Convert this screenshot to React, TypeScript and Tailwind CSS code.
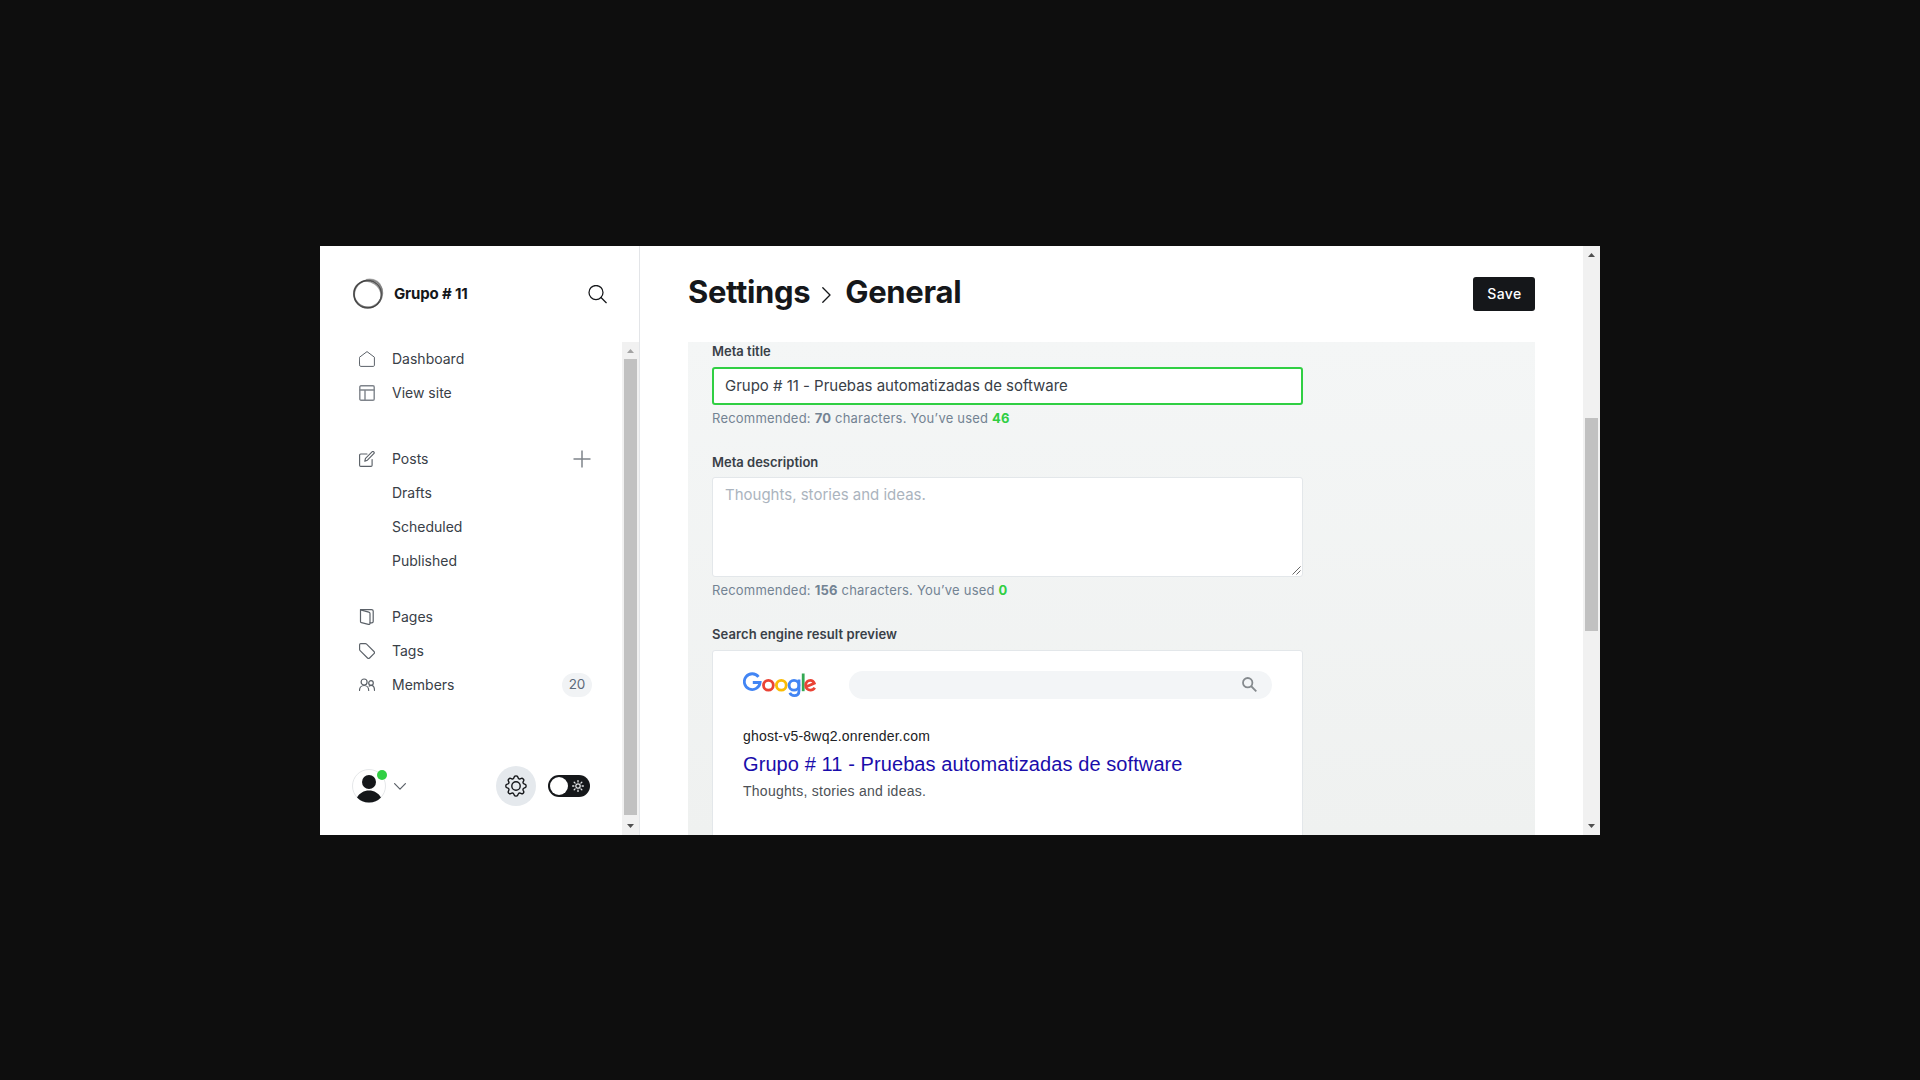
import type { ReactNode } from "react";

const stroke = { fill: "none", stroke: "currentColor", strokeLinecap: "round", strokeLinejoin: "round" } as const;

const HomeIcon = () => (
  <svg {...stroke} className="h-4 w-4" viewBox="0 0 16 16">
    <path d="M.6 6.2 8 .6l7.4 5.6v8.1c0 .6-.4 1.1-1 1.1H1.6c-.6 0-1-.5-1-1.1z" />
  </svg>
);
const LayoutIcon = () => (
  <svg {...stroke} strokeWidth="1.400" className="h-4 w-4 text-[#7f848b]" viewBox="0 0 16 16">
    <rect x=".8" y=".8" width="14.400" height="14.400" rx="1.2" />
    <path d="M.8 5h14.400M6 5v10.2" />
  </svg>
);
const PostsIcon = () => (
  <svg {...stroke} strokeWidth="1.150" className="h-4 w-4" viewBox="0 0 16 16">
    <path d="M8 3H1.7C1 3 .6 3.4.6 4v10.3c0 .6.4 1.1 1.1 1.1H12c.6 0 1.1-.5 1.1-1.1V8.5" />
    <path d="m5.8 10.2.7-2.9L13 .9c.5-.5 1.300-.5 1.800 0s.5 1.300 0 1.800L8.400 9.200z" />
  </svg>
);
const PagesIcon = () => (
  <svg {...stroke} strokeWidth="1.200" className="h-4 w-4" viewBox="0 0 16 16">
    <path d="M1.500.7h11c.9 0 1.700.6 1.700 1.400v10.400c0 .8-.7 1.300-1.500 1.300h-1.700" />
    <path d="M1.500.9v11.500c0 .6.4 1.100 1 1.300l6.900 1.700c.9.200 1.600-.2 1.600-1V4.600c0-.8-.5-1.300-1.200-1.500z" />
  </svg>
);
const TagIcon = () => (
  <svg {...stroke} strokeWidth="1.150" className="h-4 w-4" viewBox="0 0 16 16">
    <path d="M.6 1.700C.6 1 1 .6 1.700.6h4.700c.5 0 .9.200 1.200.5l7.400 7.400c.6.6.6 1.500 0 2.100l-4.400 4.400c-.6.6-1.500.6-2.100 0L1.100 7.600C.8 7.300.6 6.900.6 6.400z" />
  </svg>
);
const MembersIcon = () => (
  <svg {...stroke} strokeWidth="1.200" className="h-4 w-4" viewBox="0 0 16 16">
    <circle cx="5.100" cy="5" r="3" />
    <circle cx="12" cy="6" r="2.300" />
    <path d="M.5 13.500C.5 10.700 2.500 8.500 5.100 8.500s4.600 2.200 4.600 5M10.200 9.200c.5-.5 1.100-.8 1.800-.8 2 0 3.500 2 3.500 4.900" />
  </svg>
);

const BlogLogo = () => (
  <svg className="h-8 w-8" viewBox="0 0 32 32" fill="none">
    <circle cx="15.700" cy="16.300" r="13.800" stroke="#555" strokeWidth="1.500" />
    <ellipse cx="16.300" cy="15.600" rx="14.400" ry="13.200" transform="rotate(-38 16.300 15.600)" stroke="#444" strokeOpacity=".5" strokeWidth="1.400" />
    <ellipse cx="15.500" cy="16.300" rx="14.200" ry="12.600" transform="rotate(35 15.500 16.300)" stroke="#333" strokeOpacity=".5" strokeWidth="1.200" />
    <path d="M14 1.900c5-1.400 10.500.2 13.500 4.300 3.600 6 3.700 12.500-.5 18.200" stroke="#666" strokeOpacity=".5" strokeWidth="2" />
  </svg>
);

const GearIcon = () => (
  <svg {...stroke} strokeWidth="1.400" className="h-[22px] w-[22px] text-[#15171a]" viewBox="0 0 22 22">
    <path d="M9.300 1.800c.5-1.200 2.900-1.200 3.400 0l.5 1.300c.3.800 1.200 1.200 2 .8l1.200-.5c1.200-.5 2.900 1.100 2.300 2.300l-.6 1.200c-.3.800 0 1.700.9 2l1.200.4c1.200.5 1.200 2.900 0 3.400l-1.200.5c-.9.300-1.200 1.200-.9 2l.6 1.200c.5 1.200-1.100 2.800-2.300 2.300l-1.200-.6c-.8-.3-1.700.1-2 .9l-.5 1.200c-.5 1.200-2.900 1.200-3.400 0L8.800 19c-.3-.8-1.200-1.200-2-.9l-1.200.6c-1.200.5-2.800-1.100-2.300-2.300l.5-1.200c.4-.8 0-1.700-.8-2l-1.300-.5c-1.200-.5-1.200-2.900 0-3.400L3 8.900c.8-.3 1.200-1.200.8-2l-.5-1.200c-.5-1.200 1.100-2.800 2.300-2.300l1.200.5c.8.400 1.700 0 2-.8z" />
    <circle cx="11" cy="11" r="4.200" />
  </svg>
);
const SunIcon = () => (
  <svg className="h-3 w-3" viewBox="0 0 12 12" fill="none" stroke="#e0e2e4" strokeWidth="1.300" strokeLinecap="round">
    <circle cx="6" cy="6" r="2.200" />
    <path d="M6 .6v1.300M6 10.100v1.300M.6 6h1.300M10.100 6h1.300M2.200 2.200l.9.900M8.900 8.900l.9.900M2.200 9.800l.9-.9M8.900 3.100l.9-.9" />
  </svg>
);

const GoogleLogo = () => (
  <svg className="h-[26px] w-[74px]" viewBox="0 0 74 26" fill="none" strokeWidth="2.800">
    <path stroke="#4285f4" d="M15.500 4.800A7.900 7.900 0 1 0 17.100 10.500H9.800" />
    <circle stroke="#ea4335" cx="25.400" cy="13.200" r="4.900" />
    <circle stroke="#fbbc05" cx="38.300" cy="13.200" r="4.900" />
    <circle stroke="#4285f4" cx="51" cy="13.200" r="4.900" />
    <path stroke="#4285f4" d="M56 7.400v11.300c0 3.500-2.200 5-4.800 5-2.200 0-3.700-1.300-4.400-2.900" />
    <path stroke="#34a853" d="M60.200 1.500v17.700" />
    <path stroke="#ea4335" d="m63.300 14.700 8-3.400c-.7-1.900-2-3-3.900-3-2.700 0-4.700 2.100-4.700 4.900 0 2.900 2.100 4.900 4.800 4.900 2 0 3.400-1 4.300-2.400" />
  </svg>
);

const Arrow = ({ up = false, muted = false }: { up?: boolean; muted?: boolean }) => (
  <svg className={muted ? "h-1 w-[7px] text-[#a3a3a3]" : "h-1 w-[7px] text-[#505050]"} viewBox="0 0 7 4" fill="currentColor">
    <path d={up ? "M0 4 3.500 0 7 4z" : "M0 0h7L3.500 4z"} />
  </svg>
);

function Item({ icon, label, children }: { icon?: ReactNode; label: string; children?: ReactNode }) {
  return (
    <div className="flex h-[34px] items-center text-sm text-[#394047]">
      <span className="mr-[17px] w-4 text-[#5b6168]">{icon}</span>
      <span className="flex-1">{label}</span>
      {children}
    </div>
  );
}

function Counter({ max, used }: { max: string; used: string }) {
  return (
    <p className="h-5 text-[13px] leading-5 tracking-[0.21px] text-[#738393]">
      Recommended: <b className="font-bold">{max}</b> characters. You’ve used <b className="font-bold text-[#30cf43]">{used}</b>
    </p>
  );
}

function Sidebar() {
  return (
    <aside className="flex w-[320px] flex-col border-r border-[#e3e5e8]">
      <header className="flex h-24 shrink-0 items-center pr-8 pl-8">
        <BlogLogo />
        <span className="ml-[10px] flex-1 text-[15px] font-bold tracking-[-0.15px] text-[#15171a]">Grupo # 11</span>
        <svg {...stroke} strokeWidth="1.250" className="h-[19px] w-[19px] text-[#15171a]" viewBox="0 0 19 19">
          <circle cx="8" cy="7.500" r="7" />
          <path d="m13 12.500 5.200 5.200" />
        </svg>
      </header>
      <div className="flex min-h-0 flex-1">
        <div className="flex flex-1 flex-col pr-[31px] pl-[31px]">
          <nav className="pl-2">
            <Item icon={<HomeIcon />} label="Dashboard" />
            <Item icon={<LayoutIcon />} label="View site" />
            <div className="mt-8">
              <Item icon={<PostsIcon />} label="Posts">
                <svg className="h-[18px] w-[18px] text-[#7f848b]" viewBox="0 0 18 18" stroke="currentColor" strokeWidth="1.500">
                  <path d="M9 .5v17M.5 9h17" />
                </svg>
              </Item>
              <Item label="Drafts" />
              <Item label="Scheduled" />
              <Item label="Published" />
            </div>
            <div className="mt-[22px]">
              <Item icon={<PagesIcon />} label="Pages" />
              <Item icon={<TagIcon />} label="Tags" />
              <Item icon={<MembersIcon />} label="Members">
                <span className="-mr-px flex h-6 w-[30px] items-center justify-center rounded-full bg-[#f1f3f5] text-[13.500px] text-[#5d6a7a]">20</span>
              </Item>
            </div>
          </nav>
          <footer className="mt-auto mb-[29px] flex h-10 items-center pl-px">
            <div className="relative">
              <svg className="h-[34px] w-[34px]" viewBox="0 0 34 34">
                <circle cx="17" cy="17" r="16.500" fill="#fff" stroke="#e5e7e9" />
                <circle cx="17" cy="13" r="7" fill="#15171a" />
                <path d="M5 28.500c2.400-4.300 6.800-7 12-7s9.600 2.700 12 7A16.500 16.500 0 0 1 17 33.500 16.500 16.500 0 0 1 5 28.500z" fill="#15171a" />
              </svg>
              <span className="absolute top-px -right-px h-[10px] w-[10px] rounded-full bg-[#30cf43]" />
            </div>
            <svg {...stroke} strokeWidth="1.200" className="ml-2 h-[7px] w-3 text-[#5b6168]" viewBox="0 0 12 7">
              <path d="m.6.6 5.400 5.600L11.400.6" />
            </svg>
            <div className="ml-auto flex h-10 w-10 items-center justify-center rounded-full bg-[#e5e9ed]">
              <GearIcon />
            </div>
            <div className="mr-px ml-3 flex h-[22px] w-[42px] items-center justify-between rounded-full bg-[#15171a] pr-1.5 pl-0.5">
              <span className="h-[18px] w-[18px] rounded-full bg-white" />
              <SunIcon />
            </div>
          </footer>
        </div>
        <div className="flex w-[17px] flex-col items-center bg-[#f1f1f1]">
          <div className="flex h-[17px] shrink-0 items-center pt-px"><Arrow up muted /></div>
          <div className="h-[456px] w-[13px] bg-[#c1c1c1]" />
          <div className="mt-[9px]"><Arrow /></div>
        </div>
      </div>
    </aside>
  );
}

export default function App() {
  return (
    <div className="flex h-[1080px] w-[1920px] items-start justify-center bg-[#0e0e0e] pt-[246px] font-['Inter',sans-serif]">
      <div className="flex h-[589px] w-[1280px] overflow-hidden bg-white">
        <Sidebar />
        <main className="flex flex-1 flex-col pr-12 pl-12">
          <header className="flex h-24 shrink-0 items-center">
            <h1 className="flex flex-1 items-center text-[31px] leading-none font-bold text-[#15171a]">
              <span className="-mt-[5px] tracking-[-0.35px]">Settings</span>
              <svg {...stroke} strokeWidth="1.300" className="mt-px mr-[14px] ml-[12px] h-4 w-[9px]" viewBox="0 0 9 16">
                <path d="m.8.8 7.200 7.200L.8 15.200" />
              </svg>
              <span className="-mt-[5px] tracking-[-0.3px]">General</span>
            </h1>
            <button className="h-[34px] w-[62px] rounded-[3px] bg-[#15171a] pl-px text-sm font-medium tracking-[0.4px] text-white">Save</button>
          </header>
          <section className="flex-1 overflow-hidden bg-linear-to-b from-[#f4f6f6] to-[#eff1f0] pl-6 text-[#394047]">
            <div className="-mt-px w-[591px]">
              <label className="block h-[26px] text-[13px] leading-5 font-semibold">Meta title</label>
              <div className="flex h-[38px] items-center rounded-[3px] border-2 border-[#30cf43] bg-white pl-[11px] text-[15px] tracking-[-0.02px] text-[#394047]">
                Grupo # 11 - Pruebas automatizadas de software
              </div>
              <div className="mt-[3px]"><Counter max="70" used="46" /></div>
              <label className="mt-6 block h-[25px] text-[13px] leading-5 font-semibold">Meta description</label>
              <div className="relative h-[100px] rounded-[3px] border border-[#e3e7ea] bg-white py-[7px] pl-3 text-[15px] leading-5 text-[#abb4be]">
                Thoughts, stories and ideas.
                <svg className="absolute right-px bottom-px h-[9px] w-[9px]" viewBox="0 0 9 9" stroke="#555" strokeWidth=".9">
                  <path d="M.5 8.500l8-8M4.500 8.500l4-4" />
                </svg>
              </div>
              <div className="mt-[3px]"><Counter max="156" used="0" /></div>
              <label className="mt-6 block h-[26px] text-[13px] leading-5 font-semibold tracking-[0.09px]">Search engine result preview</label>
              <div className="h-[260px] rounded-[3px] border border-[#e3e7ea] bg-white px-[30px] pt-5 font-['Liberation_Sans',sans-serif]">
                <div className="flex h-7 items-center">
                  <GoogleLogo />
                  <div className="ml-8 flex h-7 w-[423px] items-center justify-end rounded-full bg-[#f3f5f7] pr-[15px]">
                    <svg className="-mt-px h-[15px] w-[15px]" viewBox="0 0 15 15" fill="none" stroke="#858a8e" strokeWidth="1.800">
                      <circle cx="5.700" cy="5.700" r="4.700" />
                      <path d="m9 9 5.300 5.300" />
                    </svg>
                  </div>
                </div>
                <p className="mt-[27px] h-5 text-sm leading-5 tracking-[0.22px] text-[#202124]">ghost-v5-8wq2.onrender.com</p>
                <p className="mt-[5px] h-[26px] text-xl leading-[26px] tracking-[0.09px] text-[#1a0dab]">Grupo # 11 - Pruebas automatizadas de software</p>
                <p className="mt-1 text-sm leading-5 tracking-[0.26px] text-[#4d5156]">Thoughts, stories and ideas.</p>
              </div>
            </div>
          </section>
        </main>
        <div className="flex w-[17px] flex-col items-center bg-[#f1f1f1]">
          <div className="mt-[7px] flex h-1 items-center"><Arrow up /></div>
          <div className="mt-[161px] h-[213px] w-[13px] bg-[#c1c1c1]" />
          <div className="mt-auto mb-[7px] flex h-1"><Arrow /></div>
        </div>
      </div>
    </div>
  );
}
